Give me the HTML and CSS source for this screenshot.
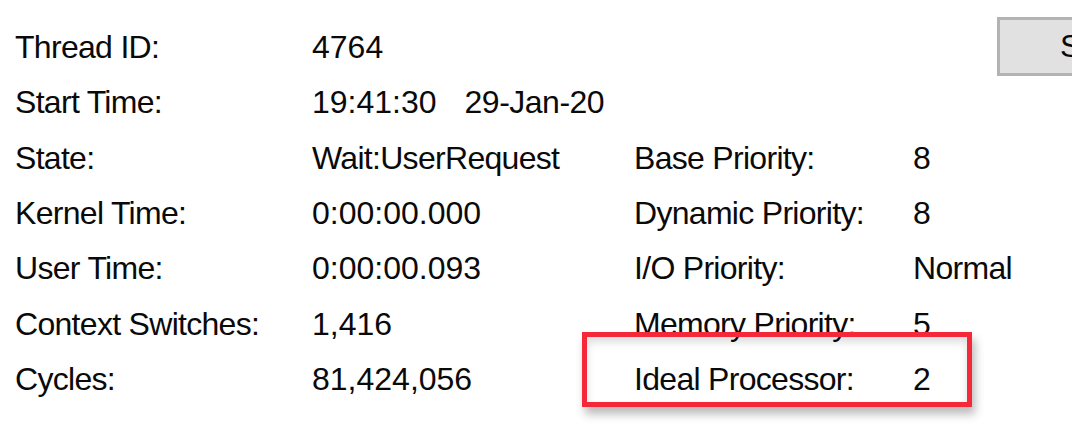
FILE: index.html
```html
<!DOCTYPE html>
<html>
<head>
<meta charset="utf-8">
<link rel="stylesheet" href="styles.css">
</head>
<body>
<div class="page">
  <div class="grid">
    <div class="lbl">Thread ID:</div><div class="val num">4764</div><div class="lbl"></div>
    <div class="btn-cell"><div class="btn"><span class="btn-text">S</span></div></div>

    <div class="lbl">Start Time:</div><div class="val num">19:41:30<span class="date">29-Jan-20</span></div><div></div><div></div>

    <div class="lbl">State:</div><div class="val">Wait:UserRequest</div><div class="lbl">Base Priority:</div><div class="val num">8</div>

    <div class="lbl">Kernel Time:</div><div class="val num">0:00:00.000</div><div class="lbl">Dynamic Priority:</div><div class="val num">8</div>

    <div class="lbl">User Time:</div><div class="val num">0:00:00.093</div><div class="lbl">I/O Priority:</div><div class="val">Normal</div>

    <div class="lbl">Context Switches:</div><div class="val num">1,416</div><div class="lbl">Memory Priority:</div><div class="val num">5</div>

    <div class="lbl">Cycles:</div><div class="val num">81,424,056</div><div class="lbl">Ideal Processor:</div><div class="val num">2</div>
  </div>
  <div class="highlight"></div>
</div>
</body>
</html>
```

FILE: styles.css
```css
html, body {
  margin: 0;
  padding: 0;
  background: #ffffff;
  overflow: hidden;
}

.page {
  position: relative;
  width: 1084px;
  height: 424px;
  overflow: hidden;
  font-family: "Liberation Sans", Arial, sans-serif;
  font-size: 32px;
  letter-spacing: -0.7px;
  color: #0a0a0a;
}

.grid {
  display: grid;
  grid-template-columns: 297px 322px 279px 1fr;
  grid-auto-rows: 55.33px;
  line-height: 55.33px;
  padding: 20px 0 0 15px;
  white-space: nowrap;
}

.num {
  letter-spacing: 0;
}

.date {
  margin-left: 28px;
  letter-spacing: -0.5px;
}

.btn-cell {
  position: relative;
}

.btn {
  margin: -3px 0 0 84px;
  width: 12px;
  height: 53px;
  box-sizing: content-box;
  border: 3px solid #b3b3b3;
  border-right: 0;
  background: #e1e1e1;
  line-height: 53px;
  padding-left: 60px;
  overflow: hidden;
  color: #0a0a0a;
}

.btn-text {
  display: inline-block;
  letter-spacing: 0;
}

.highlight {
  position: absolute;
  left: 582px;
  top: 332px;
  width: 380px;
  height: 65px;
  border: 5px solid #f5283a;
  box-shadow: inset 0 5px 8px rgba(0, 0, 0, 0.14), 3px 7px 9px rgba(0, 0, 0, 0.28);
}
```
